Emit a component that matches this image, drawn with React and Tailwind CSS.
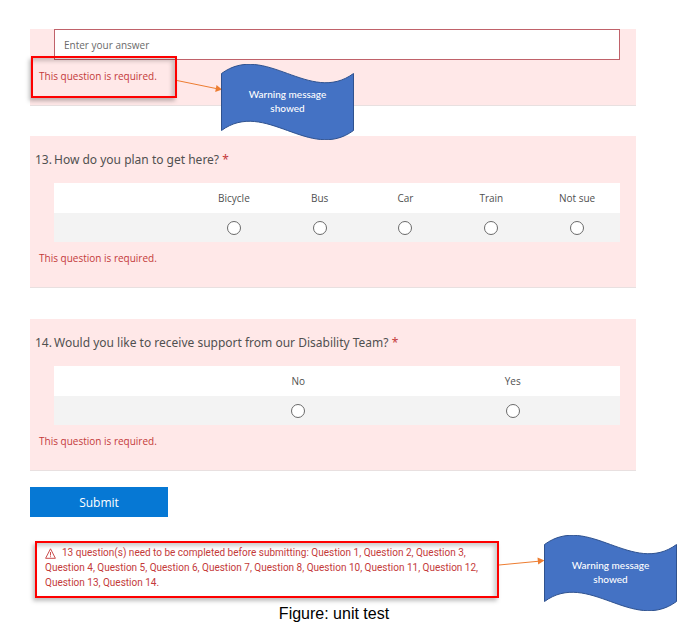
import React from 'react';

const SEGOE = "font-['Open_Sans','Noto_Sans',sans-serif]";

function Flag({ className }) {
  return (
    <div className={`h-[76px] w-[133px] ${className}`}>
      <div className="relative flex h-full items-center justify-center pb-0.5">
        <svg className="absolute inset-0" width="133" height="76" viewBox="0 0 133 76" aria-hidden="true">
          <path
            d="M.5 9.5C44-22.5 89 41.5 132.5 9.5V66.5C89 98.5 44 34.5 .5 66.5Z"
            fill="#4472c4"
            stroke="#2f528f"
          />
        </svg>
        <p className="relative text-center font-[Lato,sans-serif] text-[10px] leading-[14px] font-medium text-white">
          Warning message
          <br />
          showed
        </p>
      </div>
    </div>
  );
}

function Required() {
  return <p className="mt-2 ml-[9px] text-[10px] leading-4 text-[#c43a3a]">This question is required.</p>;
}

function Choice({ number, title, options }) {
  return (
    <section className="border-b border-[#e8e0e0] bg-[#ffe8e8] pt-3.5 pb-[21px]">
      <h2
        id={`q${number}`}
        className="flex pl-[5px] font-['Noto_Sans',sans-serif] text-[12px] leading-5 text-[#505050]"
      >
        <span className="w-[19px] shrink-0">{number}.</span>
        <span>
          {title} <span className="text-[#c43a3a]">*</span>
        </span>
      </h2>
      <div className="mt-[13px] mr-4 ml-6">
        <table className="w-full table-fixed border-collapse text-[10px] text-[#505050]" aria-labelledby={`q${number}`}>
          <thead>
            <tr className="h-[30px] bg-white">
              <td className="w-[137px] p-0" />
              {options.map((o) => (
                <th key={o} id={`q${number}-${o}`} scope="col" className="p-0 font-normal">
                  {o}
                </th>
              ))}
            </tr>
          </thead>
          <tbody>
            <tr className="h-[29px] bg-[#f3f3f3]">
              <td className="p-0" />
              {options.map((o) => (
                <td key={o} className="p-0">
                  <input
                    type="radio"
                    name={`q${number}`}
                    aria-labelledby={`q${number}-${o}`}
                    className="mx-auto block size-3.5 appearance-none rounded-full border border-[#6a6a6a] bg-white checked:border-4"
                  />
                </td>
              ))}
            </tr>
          </tbody>
        </table>
      </div>
      <Required />
    </section>
  );
}

export default function App() {
  return (
    <main className={`bg-white pt-[29px] ${SEGOE}`}>
      <form className="pr-[55px] pl-[30px]" onSubmit={(e) => e.preventDefault()}>
        <section className="relative border-b border-[#e8e0e0] bg-[#ffe8e8] pb-[21px]">
          <div className="mr-4 ml-6">
            <input
              type="text"
              aria-label="Answer"
              placeholder="Enter your answer"
              className="block h-[31px] w-full border border-[#c0626a] bg-white px-[9px] text-[10px] text-[#333] placeholder:text-[#6a6a6a]"
            />
          </div>
          <Required />
          <div className="pointer-events-none absolute top-[27px] left-px h-[42px] w-[146px] border-2 border-[#fe0000] shadow-[-2px_3px_4px_rgba(0,0,0,0.25),inset_-3px_3px_4px_rgba(0,0,0,0.2)]" />
          <svg className="absolute top-[46px] left-[147px]" width="45" height="20" viewBox="0 0 45 20" aria-hidden="true">
            <path d="M0 5.5L39 13.5" stroke="#ed7d31" fill="none" />
            <path d="M39.500 10L45 14.500L38.200 17Z" fill="#ed7d31" />
          </svg>
          <Flag className="absolute top-[35px] left-[191px]" />
        </section>
        <div className="mt-[30px] flex flex-col gap-[31px]">
          <Choice number={13} title="How do you plan to get here?" options={['Bicycle', 'Bus', 'Car', 'Train', 'Not sue']} />
          <Choice number={14} title="Would you like to receive support from our Disability Team?" options={['No', 'Yes']} />
        </div>
        <button type="submit" className="mt-4 block h-[30px] w-[138px] bg-[#0678d4] pt-0.5 text-[12px] text-white">
          Submit
        </button>
      </form>
      <div className="mt-[18px] flex pr-3.5 pl-[35px]">
        <div
          role="alert"
          className="mt-1.5 mb-[13px] min-w-0 flex-1 border-2 border-[#fe0000] px-2 pt-0.5 pb-1.5 font-[Roboto,sans-serif] text-[10px] leading-[15px] text-[#c43a3a] shadow-[-2px_3px_4px_rgba(0,0,0,0.25),inset_-3px_3px_4px_rgba(0,0,0,0.2)]"
        >
          <svg className="mr-1.5 inline-block" width="11" height="11" viewBox="0 0 11 11" fill="none" stroke="#c43a3a" strokeWidth="0.9" aria-hidden="true">
            <path d="M5.500 .8L10.400 10.300H.6ZM5.500 4V7.500M5.500 8.300V9.200" />
          </svg>
          13 question(s) need to be completed before submitting: Question 1, Question 2, Question 3,
          <br />
          Question 4, Question 5, Question 6, Question 7, Question 8, Question 10, Question 11, Question 12,
          <br />
          Question 13, Question 14.
        </div>
        <svg className="mt-[18px] shrink-0" width="45" height="20" viewBox="0 0 45 20" aria-hidden="true">
          <path d="M0 12L39 8.300" stroke="#ed7d31" fill="none" />
          <path d="M38.500 4.500L45.500 7.500L39.200 11.500Z" fill="#ed7d31" />
        </svg>
        <Flag className="shrink-0" />
      </div>
      <p className="-mt-[7px] pr-[55px] pl-8 text-center font-['Liberation_Sans',sans-serif] text-[16px] leading-5 text-black">
        Figure: unit test
      </p>
    </main>
  );
}
